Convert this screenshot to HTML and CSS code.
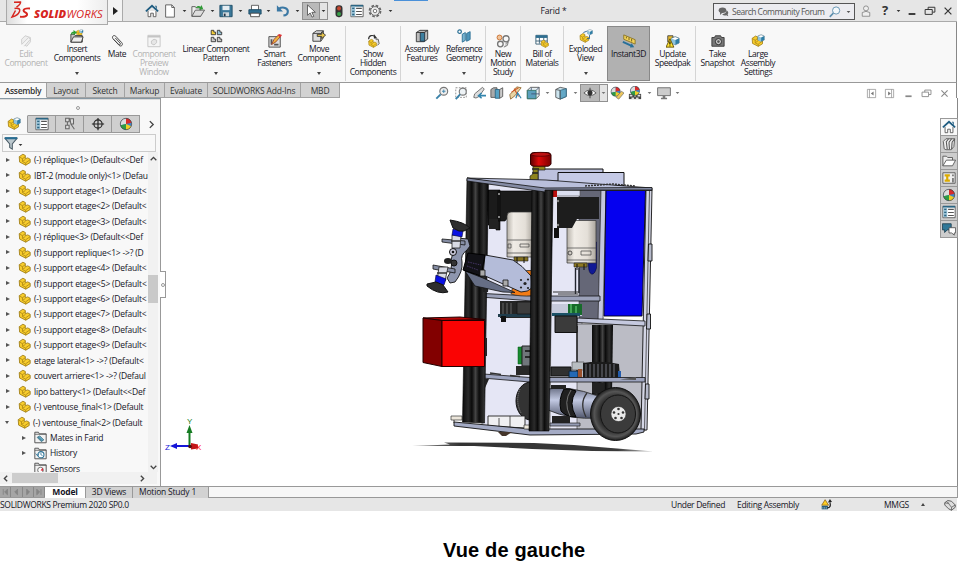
FILE: index.html
```html
<!DOCTYPE html>
<html lang="fr">
<head>
<meta charset="utf-8">
<title>Vue de gauche</title>
<link rel="stylesheet" href="styles.css">
</head>
<body>
<svg class="sprite" aria-hidden="true">
  <symbol id="dd" viewBox="0 0 6 4"><path d="M0.8 0.7h4.4L3 3.3z" fill="currentColor"/></symbol>
  <symbol id="home" viewBox="0 0 16 16"><path d="M3.5 8v6.5h3v-4h3v4h3V8" fill="#fff" stroke="#555"/><path d="M1 8.5 8 2l7 6.500" fill="none" stroke="#1f5c80" stroke-width="2"/><path d="M11.500 2.500h1.500v3" fill="none" stroke="#1f5c80"/></symbol>
  <symbol id="new" viewBox="0 0 16 16"><path d="M3 1h7l3 3v11H3z" fill="#fff" stroke="#555"/><path d="M10 1v3h3" fill="none" stroke="#555"/></symbol>
  <symbol id="open" viewBox="0 0 16 16"><path d="M1 14V3h4l1 1.500h5V14z" fill="#eee" stroke="#555"/><path d="M1 14 5 7h10.500L11 14z" fill="#ddd" stroke="#555"/><path d="M5 5c2-3 4-3 6-2l1-2 2 5-5 .5 1-2C8 4 6 4 5 5z" fill="#2f9a36"/></symbol>
  <symbol id="save" viewBox="0 0 16 16"><path d="M1 1.500h14v13H1z" fill="#3b7899" stroke="#1c4a63"/><path d="M4 2h8v5H4z" fill="#e5edf2"/><path d="M4.500 9.500h7V14h-7z" fill="#cfd8dd"/><path d="M5.500 11h2v3h-2z" fill="#234"/></symbol>
  <symbol id="print" viewBox="0 0 16 16"><path d="M4 1.500h8V7H4z" fill="#fff" stroke="#555"/><path d="M1 6.500h14v5H1z" fill="#2f6e90" stroke="#1c4a63"/><path d="M3 10.500h10v4H3z" fill="#fff" stroke="#444"/></symbol>
  <symbol id="undo" viewBox="0 0 16 16"><path d="M3 5.500c5-3 11-1 10.500 3.500-.3 3-2.500 4-5 4" fill="none" stroke="#3b78a4" stroke-width="2.400"/><path d="M1 1.500v7h7z" fill="#3b78a4"/></symbol>
  <symbol id="cursor" viewBox="0 0 16 16"><path d="M4 1v12l3-2.800L9.200 15l2-.9L9 9.500h4z" fill="#fff" stroke="#555"/></symbol>
  <symbol id="traffic" viewBox="0 0 16 16"><rect x="4" y="1.500" width="8" height="13.500" rx="3.500" fill="#333"/><circle cx="8" cy="5" r="2.300" fill="#c4472f"/><circle cx="8" cy="11.300" r="2.300" fill="#39a14a"/></symbol>
  <symbol id="list" viewBox="0 0 16 16"><path d="M1 1.500h14v13H1z" fill="#fff" stroke="#555"/><path d="M1 1h14v2H1z" fill="#2b6583"/><path d="M1.500 3h4.500v11h-4.500z" fill="#9cc3d6"/><path d="M2.500 5h2.500M2.500 8.500h2.500M2.500 12h2.500" stroke="#2b6583" stroke-width="1.500"/><path d="M7 5h6.500M7 8.500h6.500M7 12h6.500" stroke="#555" stroke-width="1.200"/></symbol>
  <symbol id="gear" viewBox="0 0 16 16"><circle cx="8" cy="8" r="6.300" fill="none" stroke="#666" stroke-width="2" stroke-dasharray="3 1.950"/><circle cx="8" cy="8" r="5" fill="#eee" stroke="#666"/><circle cx="8" cy="8" r="2" fill="#fff" stroke="#666"/></symbol>
  <symbol id="chat" viewBox="0 0 16 16"><ellipse cx="6.500" cy="6" rx="5.500" ry="4" fill="#666"/><path d="M3 8v5l4-4z" fill="#666"/><path d="M12.500 6q4 3 1.500 6l1 3-3-1.500q-4 1-6-2 6-.5 6.500-5.500z" fill="#666"/></symbol>
  <symbol id="glass" viewBox="0 0 16 16"><circle cx="9.500" cy="6" r="4.800" fill="#f3f8fb" stroke="#5c8fae" stroke-width="1.200"/><path d="M5.800 9.500 1 14.500" stroke="#5c8fae" stroke-width="2"/></symbol>
  <symbol id="user" viewBox="0 0 16 16"><circle cx="8" cy="4.500" r="3.300" fill="#eee" stroke="#777"/><path d="M3 15V10q5-3 10 0v5z" fill="#eee" stroke="#777"/></symbol>
  <symbol id="min" viewBox="0 0 16 16"><path d="M3.500 12h9" stroke="currentColor" stroke-width="2.500"/></symbol>
  <symbol id="restore" viewBox="0 0 16 16"><path d="M5.500 6V3h9v6.500h-3" fill="none" stroke="currentColor" stroke-width="1.300"/><path d="M1.500 6h9.500v6.500H1.500z" fill="none" stroke="currentColor" stroke-width="1.300"/></symbol>
  <symbol id="close" viewBox="0 0 16 16"><path d="m3.500 3.500 9 9m0-9-9 9" stroke="currentColor" stroke-width="1.600"/></symbol>
  <symbol id="part" viewBox="0 0 16 16"><path d="M1.500 4.500 6 1.500l3 1.500v4l3-1 3 1.700v4L9.500 15 2 11.200z" fill="#f8cd2c" stroke="#9a770f"/><path d="M2 5l3.500 2v3.500L9.500 12.500V15M5.500 7 9 4.500M9.500 12 14.500 8.500M6 10l3-2" fill="none" stroke="#9a770f" stroke-width=".8"/></symbol>
  <symbol id="cube" viewBox="0 0 16 16"><path d="M8 1.500 14.500 4v8L8 15 1.500 12V4z" fill="#fff" stroke="#1f4f68"/><path d="M8 7 14.500 4v8L8 15z" fill="#2f7ea6"/><path d="M1.500 4 8 7v8L1.500 12z" fill="#8ec3dc"/></symbol>
  <symbol id="asm" viewBox="0 0 16 16"><use href="#part" x="0" y="1" width="14" height="14"/><use href="#cube" x="7" y="0" width="9" height="9"/></symbol>
  <symbol id="edit" viewBox="0 0 16 16"><g opacity=".35"><path d="M3 6 7 2l6 2v5l-4 5-6-3z" fill="#ddd" stroke="#777"/><path d="m3 12 8-8 2 2-7 8" fill="#eee" stroke="#777"/></g></symbol>
  <symbol id="insert" viewBox="0 0 16 16"><use href="#asm" x="6" y="0" width="10" height="9"/><path d="M1 15V6h4l1 1.500h8V15z" fill="#c9c9c9" stroke="#333"/><path d="M1 15 4 9h11l-2 6z" fill="#eee" stroke="#333"/><path d="M1 7C1 3 3 3 4 3V1l4 3-4 3V5C3 5 2 5 1 7z" fill="#2ba032"/></symbol>
  <symbol id="mate" viewBox="0 0 16 16"><path d="M4 6 10.500 13c2 2 5-.5 3-3L6.500 2.500c-2.200-2-5 .5-3 3L10 12c1.300 1 2.600-.5 1.500-1.700L6 4.500" fill="none" stroke="#444" stroke-width="1.100"/></symbol>
  <symbol id="preview" viewBox="0 0 16 16"><g opacity=".4"><path d="M1 1.500h14v13H1z" fill="#f3f3f3" stroke="#777"/><path d="M1 3h14" stroke="#777" stroke-width="2"/><path d="m5 8 3-2 3 1v3l-3 2.500L5 11z" fill="#ccc" stroke="#777"/></g></symbol>
  <symbol id="linear" viewBox="0 0 16 16"><g stroke="#333" fill="#ccc"><path d="M2.500 1.500h3v2h2v3h-5z" fill="#f2cd3a"/><path d="M9.500 1.500h3v2h2v3h-5z" fill="#9ac5da"/><path d="M2.500 9.500h3v2h2v3h-5zM9.500 9.500h3v2h2v3h-5z"/></g></symbol>
  <symbol id="smart" viewBox="0 0 16 16"><path d="M1 3h13v12H1z" fill="#ddd" stroke="#444"/><path d="M3 6h2v6H3zM7 11h5v2H7z" fill="#555"/><path d="m4 12 3-6 5-5 2 2-5 6z" fill="#efb33c" stroke="#943"/><path d="m11 1 3 3 2-3-3-1z" fill="#d33"/></symbol>
  <symbol id="move" viewBox="0 0 16 16"><path d="M1 5 5 2h8v8l-3 4H1z" fill="#ddd" stroke="#333"/><path d="M1 5h9l3-3M10 5v9" fill="none" stroke="#333"/><path d="M6 6h5V3.500L15.500 7 11 11V8.500H6z" fill="#e7c54b" stroke="#333"/></symbol>
  <symbol id="hidden" viewBox="0 0 16 16"><path d="M3 6c0-5 5-5 7-3" fill="none" stroke="#333" stroke-width="1.400"/><path d="M9 0v5h4z" fill="#333"/><use href="#part" x="2" y="5" width="11" height="11"/><path d="M11 6h3l1 5-2 2" fill="#ddd" stroke="#555"/></symbol>
  <symbol id="afeat" viewBox="0 0 16 16"><path d="m1.500 4 4-2.500h9v10l-4 3h-9z" fill="#bbb" stroke="#333"/><path d="M6 4h5v10H6z" fill="#3d7f9f" stroke="#234"/><path d="M1.500 4h9l4-2.500" fill="none" stroke="#333"/></symbol>
  <symbol id="refgeo" viewBox="0 0 16 16"><circle cx="3" cy="3" r="2" fill="#fff" stroke="#2a6f94" stroke-width="1.400"/><path d="M6 6 9.500 4v9L6 15z" fill="#79b3d0" stroke="#2a6f94"/><path d="M11 5 15 3v9l-4 2z" fill="#4f96bb" stroke="#2a6f94"/></symbol>
  <symbol id="motion" viewBox="0 0 16 16"><circle cx="4" cy="4" r="2.800" fill="#eec49c" stroke="#c86a28"/><g fill="none" stroke="#777" stroke-width="1.500"><circle cx="11.500" cy="5.500" r="3.500"/><circle cx="5" cy="11.500" r="3.200"/></g><path d="m11 11 3-2-1 4-4 2" fill="#ccc" stroke="#777"/></symbol>
  <symbol id="bom" viewBox="0 0 16 16"><path d="M1 1.500h13v10H1z" fill="#fff" stroke="#355b72"/><path d="M1 1.500h13v3H1z" fill="#2e6f92"/><path d="M5 4v7M10 4v7M1 8h13" stroke="#355b72"/><use href="#part" x="6" y="6" width="10" height="10"/></symbol>
  <symbol id="explode" viewBox="0 0 16 16"><use href="#part" x="0" y="4" width="12" height="12"/><use href="#cube" x="9" y="0" width="7" height="7"/><path d="M5 4 9 2.500M12 7v4h-3" fill="none" stroke="#245c91"/></symbol>
  <symbol id="instant" viewBox="0 0 16 16"><path d="m2 1 13 5.500v5L2 6z" fill="#f2d35a" stroke="#8a7320"/><path d="M5 3v2M8 4v3M11 5.500v3" stroke="#665615"/><path d="m1 9 10 4.500" stroke="#287099" stroke-width="2.200"/><path d="m14 15-5 .5 2-5z" fill="#287099"/></symbol>
  <symbol id="speedpak" viewBox="0 0 16 16"><path d="M2 2h6v7H2z" fill="#e5b92e" stroke="#444"/><use href="#cube" x="5" y="0" width="11" height="15"/><path d="M4.500 5.500 9 15H0z" fill="#ffe22e" stroke="#594800"/><path d="M4.500 8.500v3.500M4.500 13v1" stroke="#000" stroke-width="1.300"/></symbol>
  <symbol id="camera" viewBox="0 0 16 16"><path d="M1 4h3l1-2h6l1 2h3v10H1z" fill="#777" stroke="#333"/><circle cx="8.500" cy="8.700" r="3.500" fill="#ccc" stroke="#222"/><circle cx="8.500" cy="8.700" r="1.500" fill="#555"/></symbol>
  <symbol id="zoomfit" viewBox="0 0 16 16"><circle cx="10" cy="6" r="4.500" fill="#eee" stroke="#777" stroke-width="1.300"/><path d="M8 6h4M10 4v4" stroke="#3981a8"/><path d="M6.500 9.500 1.500 14.500" stroke="#3981a8" stroke-width="2.200"/></symbol>
  <symbol id="zoomarea" viewBox="0 0 16 16"><path d="M2 2h12v11H2z" fill="none" stroke="#888" stroke-dasharray="2 1.500"/><circle cx="10" cy="6.500" r="4" fill="#eef3f6" stroke="#777" stroke-width="1.300"/><path d="M7 9.500 2 15" stroke="#3981a8" stroke-width="2.200"/></symbol>
  <symbol id="prev" viewBox="0 0 16 16"><path d="M3 9 12 1.500l2 2L8 12q-4 3-6 1z" fill="#ddd" stroke="#666"/><path d="M8 11h8M11 8l-3.500 3 3.500 3" fill="none" stroke="#3485ad" stroke-width="1.800"/></symbol>
  <symbol id="section" viewBox="0 0 16 16"><path d="M1 4 4 2h4v11H1z" fill="#aaa" stroke="#555"/><path d="M6 4h5v10H6z" fill="#56a2c4" stroke="#2a6685"/><path d="M11 4 14.500 2v10L11 14z" fill="#ccc" stroke="#555"/></symbol>
  <symbol id="dyn" viewBox="0 0 16 16"><path d="M2 10 10 1l5 1-7 9-5 4z" fill="#e8d5a4" stroke="#946b35"/><path d="m7 3 5 9M4 7l8-5" stroke="#cf5a2a" stroke-width="1.200"/><path d="m9 14 2-6 4 6" fill="none" stroke="#3485ad" stroke-width="1.400"/></symbol>
  <symbol id="orient" viewBox="0 0 16 16"><path d="M1.500 5 5 1.500h10V11l-3.500 3.500h-10z" fill="#e7eff3" stroke="#555"/><path d="M1.500 5H11.500v9.500h-10z" fill="#5b9fbd" stroke="#376"/><path d="m11.500 5 3.500-3.500M6 2v3M6 9h9" fill="none" stroke="#457"/></symbol>
  <symbol id="display" viewBox="0 0 16 16"><path d="m2 4 5-2.500L14 3v9l-7 3-5-2z" fill="#cde5ef" stroke="#555"/><path d="m7 5 7-2v9l-7 3z" fill="#64a8c6" stroke="#356b86"/><path d="m2 4 5 1v10" fill="none" stroke="#555"/></symbol>
  <symbol id="eye" viewBox="0 0 16 16"><path d="M1 8q7-7 14 0-7 6-14 0z" fill="#fff" stroke="#555"/><circle cx="8" cy="7.800" r="2.900" fill="#333"/><path d="M8 2v12" stroke="#333"/></symbol>
  <symbol id="ball" viewBox="0 0 16 16"><circle cx="8" cy="8" r="6.500" fill="#3d85c7"/><path d="M8 8V1.500A6.500 6.500 0 0 0 1.700 9.500z" fill="#ddd"/><path d="M8 8V1.500a6.500 6.500 0 0 1 6.300 5z" fill="#d92b2b"/><path d="M8 8 1.700 9.500A6.500 6.500 0 0 0 8 14.500z" fill="#2f9b45"/><path d="M8 8v6.500a6.500 6.500 0 0 0 6-4z" fill="#f0cf26"/><circle cx="8" cy="8" r="6.500" fill="none" stroke="#444" stroke-width=".8"/></symbol>
  <symbol id="appear" viewBox="0 0 16 16"><use href="#ball" x="0" y="0" width="13" height="13"/><path d="m7 13 6-7 3 2-6 7z" fill="#ecc65d" stroke="#666" stroke-width=".7"/></symbol>
  <symbol id="scene" viewBox="0 0 16 16"><path d="M1 9h14v6H1z" fill="#444"/><path d="M2 11h3M7 11h2M11 11h3M4 14h3M9 14h3" stroke="#ddd" stroke-width="1.800"/><use href="#ball" x="1.500" y="-1" width="13" height="13"/></symbol>
  <symbol id="monitor" viewBox="0 0 16 16"><path d="M.7 2h14.600v9H.7z" fill="#ccc" stroke="#666"/><path d="M6.500 11h3v2.500h2V15h-7v-1.500h2z" fill="#777"/></symbol>
  <symbol id="paneL" viewBox="0 0 16 16"><path d="M2 2h12v12H2zM5 2v12" fill="none" stroke="#888"/><path d="m11 5-4 3 4 3z" fill="#777"/></symbol>
  <symbol id="paneR" viewBox="0 0 16 16"><path d="M2 2h12v12H2zM11 2v12" fill="none" stroke="#888"/><path d="m6 5 4 3-4 3z" fill="#777"/></symbol>
  <symbol id="config" viewBox="0 0 16 16"><path d="M3 1.500h4v4H3zM3 9.500h4v4H3zM8 2h4v6H9zM9 8l4 6M5 5.500v4" fill="#ddd" stroke="#666" stroke-width="1.200"/></symbol>
  <symbol id="dim" viewBox="0 0 16 16"><circle cx="8" cy="8" r="4.700" fill="none" stroke="#222" stroke-width="1.300"/><path d="M8 1v14M1 8h14" stroke="#222" stroke-width="1.300"/></symbol>
  <symbol id="filter" viewBox="0 0 16 16"><path d="M1 2.500h14L9.500 9v6l-3-1.800V9z" fill="#bcc8ce" stroke="#4d5e68" stroke-width="1.200"/><path d="M1 2.500h14" stroke="#286d92" stroke-width="2.500"/></symbol>
  <symbol id="books" viewBox="0 0 16 16"><path d="m1.500 5 3-3h10l-1 9-3 3.500h-6l-2-1z" fill="#eee" stroke="#555"/><path d="m4.500 6 3-4M8 6l3-4M11.500 6l3-4M5 6l1 8M8 6l.5 8M11.500 6l-.5 8" fill="none" stroke="#555" stroke-width="1.200"/></symbol>
  <symbol id="folder" viewBox="0 0 16 16"><path d="M1 13.500v-11h4L6.500 4H12v3" fill="#eee" stroke="#555"/><path d="M1 13.500 5 7h10.500l-3.500 6.500z" fill="#fff" stroke="#555"/></symbol>
  <symbol id="palette" viewBox="0 0 16 16"><path d="M1 2h14v12H1z" fill="#eee" stroke="#555"/><path d="M3 5h6M6 5v5M3 11h6" stroke="#dcab00" stroke-width="2.500"/><path d="M11.500 4h2v2h-2zM11.500 8h2v5h-2z" fill="#777"/></symbol>
  <symbol id="forum" viewBox="0 0 16 16"><path d="M.5 2h10v7H6l-3 3V9H.5z" fill="#2f7898" stroke="#245"/><path d="M8 6.500h7.500v6H14v2.500l-3-2.500H8z" fill="#fff" stroke="#555"/></symbol>
  <symbol id="fold" viewBox="0 0 16 16"><path d="M1 14.500v-13h4.500l1 2h8.500v11z" fill="#f2f2f2" stroke="#555" stroke-width="1.200"/><path d="M1 4h14" stroke="#555"/></symbol>
  <symbol id="rebuild" viewBox="0 0 16 16"><path d="m6 1 5 8H1z" fill="#ffce22" stroke="#805500"/><path d="M1 10h9v5H1z" fill="#275d7c"/><path d="M2 13h7" stroke="#fff" stroke-dasharray="1.500 1"/><path d="M9 13c5 0 5-4 4-8" fill="none" stroke="#222" stroke-width="1.800"/><path d="m10 5 6-.5L13 0z" fill="#222"/></symbol>
  <symbol id="tag" viewBox="0 0 16 16"><path d="M1 5 5 2l5 1 5 5v3l-5 4-4-2-5-5z" fill="#ddd" stroke="#555" stroke-width="1.200"/><path d="m1 5 5 1 4 5 5-3M10 11v4M4 4l3 2" fill="none" stroke="#555"/></symbol>
</svg>

<main class="window">
  <header class="titlebar">
    <div class="logo">
      <svg class="ds" viewBox="0 0 20 17"><g fill="none" stroke="#d6261f"><path d="M3 1.200 9.500 1Q10 3 5.500 6.200" stroke-width="1.500"/><path d="M3.500 7.500Q10 6.500 8.500 10.500 7 14.500 1 16L4.500 9.500" stroke-width="1.500"/><path d="M19 7.500Q13 7 12.500 9.500C12.500 11.500 17 11.500 16 14 15 16 11.500 16 9 15.800" stroke-width="1.900"/></g></svg>
      <span class="brand"><b>SOLID</b>WORKS</span>
    </div>
    <div class="play"></div>
    <nav class="quick">
      <svg><use href="#home"/></svg><svg><use href="#new"/></svg><svg class="dd"><use href="#dd"/></svg>
      <svg><use href="#open"/></svg><svg class="dd"><use href="#dd"/></svg><svg><use href="#save"/></svg><svg class="dd"><use href="#dd"/></svg>
      <svg><use href="#print"/></svg><svg class="dd"><use href="#dd"/></svg><svg><use href="#undo"/></svg><svg class="dd"><use href="#dd"/></svg>
      <span class="pressed"><svg><use href="#cursor"/></svg></span><span class="pressed-dd"><svg class="dd"><use href="#dd"/></svg></span>
      <svg><use href="#traffic"/></svg><svg><use href="#list"/></svg><svg><use href="#gear"/></svg><svg class="dd"><use href="#dd"/></svg>
    </nav>
    <div class="doc"><i class="accent"></i>Farid *</div>
    <div class="search"><svg><use href="#chat"/></svg><span>Search Community Forum</span><svg class="lens"><use href="#glass"/></svg><svg class="dd"><use href="#dd"/></svg></div>
    <div class="sys"><svg><use href="#user"/></svg><b>?</b><svg class="dd"><use href="#dd"/></svg><svg><use href="#min"/></svg><svg><use href="#restore"/></svg><svg><use href="#close"/></svg></div>
  </header>

  <section class="ribbon">
    <div class="cmd off"><svg><use href="#edit"/></svg><span>Edit<br>Component</span></div>
    <div class="cmd menu"><svg><use href="#insert"/></svg><span>Insert<br>Components</span></div>
    <div class="cmd"><svg><use href="#mate"/></svg><span>Mate</span></div>
    <div class="cmd off"><svg><use href="#preview"/></svg><span>Component<br>Preview<br>Window</span></div>
    <div class="cmd menu"><svg><use href="#linear"/></svg><span>Linear Component<br>Pattern</span></div>
    <div class="cmd"><svg><use href="#smart"/></svg><span>Smart<br>Fasteners</span></div>
    <div class="cmd menu end"><svg><use href="#move"/></svg><span>Move<br>Component</span></div>
    <div class="cmd end"><svg><use href="#hidden"/></svg><span>Show<br>Hidden<br>Components</span></div>
    <div class="cmd menu"><svg><use href="#afeat"/></svg><span>Assembly<br>Features</span></div>
    <div class="cmd menu end"><svg><use href="#refgeo"/></svg><span>Reference<br>Geometry</span></div>
    <div class="cmd end"><svg><use href="#motion"/></svg><span>New<br>Motion<br>Study</span></div>
    <div class="cmd end"><svg><use href="#bom"/></svg><span>Bill of<br>Materials</span></div>
    <div class="cmd menu"><svg><use href="#explode"/></svg><span>Exploded<br>View</span></div>
    <div class="cmd active"><svg><use href="#instant"/></svg><span>Instant3D</span></div>
    <div class="cmd end"><svg><use href="#speedpak"/></svg><span>Update<br>Speedpak</span></div>
    <div class="cmd"><svg><use href="#camera"/></svg><span>Take<br>Snapshot</span></div>
    <div class="cmd"><svg><use href="#asm"/></svg><span>Large<br>Assembly<br>Settings</span></div>
  </section>

  <div class="tabrow">
    <div class="tabs"><span class="on">Assembly</span><span>Layout</span><span>Sketch</span><span>Markup</span><span>Evaluate</span><span>SOLIDWORKS Add-Ins</span><span>MBD</span></div>
    <div class="hud">
      <svg><use href="#zoomfit"/></svg><svg><use href="#zoomarea"/></svg><svg><use href="#prev"/></svg><svg><use href="#section"/></svg><svg><use href="#dyn"/></svg><svg><use href="#orient"/></svg><svg class="dd"><use href="#dd"/></svg><svg><use href="#display"/></svg><svg class="dd"><use href="#dd"/></svg><span class="pressed"><svg><use href="#eye"/></svg></span><span class="pressed-dd"><svg class="dd"><use href="#dd"/></svg></span><svg><use href="#appear"/></svg><svg><use href="#scene"/></svg><svg class="dd"><use href="#dd"/></svg><svg><use href="#monitor"/></svg><svg class="dd"><use href="#dd"/></svg>
    </div>
    <div class="docsys"><svg><use href="#paneL"/></svg><svg><use href="#paneR"/></svg><svg><use href="#min"/></svg><svg><use href="#restore"/></svg><svg><use href="#close"/></svg></div>
  </div>

  <div class="work">
    <aside class="panel">
      <div class="grip"><i></i></div>
      <div class="ptabs">
        <span class="on"><svg><use href="#asm"/></svg></span><span><svg><use href="#list"/></svg></span><span><svg><use href="#config"/></svg></span><span><svg><use href="#dim"/></svg></span><span><svg><use href="#ball"/></svg></span>
        <svg class="more" viewBox="0 0 8 8"><path d="m2.500 1 3 3-3 3" fill="none" stroke="#444" stroke-width="1.200"/></svg>
      </div>
      <div class="filter"><svg><use href="#filter"/></svg><svg class="dd"><use href="#dd"/></svg></div>
      <div class="treebox">
        <ul class="tree">
          <li><svg><use href="#part"/></svg>(-) réplique&lt;1&gt; (Default&lt;&lt;Def</li>
          <li><svg><use href="#part"/></svg>IBT-2 (module only)&lt;1&gt; (Defau</li>
          <li><svg><use href="#part"/></svg>(-) support etage&lt;1&gt; (Default&lt;</li>
          <li><svg><use href="#part"/></svg>(-) support etage&lt;2&gt; (Default&lt;</li>
          <li><svg><use href="#part"/></svg>(-) support etage&lt;3&gt; (Default&lt;</li>
          <li><svg><use href="#part"/></svg>(-) réplique&lt;3&gt; (Default&lt;&lt;Def</li>
          <li><svg><use href="#part"/></svg>(f) support replique&lt;1&gt; -&gt;? (D</li>
          <li><svg><use href="#part"/></svg>(-) support etage&lt;4&gt; (Default&lt;</li>
          <li><svg><use href="#part"/></svg>(f) support etage&lt;5&gt; (Default&lt;</li>
          <li><svg><use href="#part"/></svg>(-) support etage&lt;6&gt; (Default&lt;</li>
          <li><svg><use href="#part"/></svg>(-) support etage&lt;7&gt; (Default&lt;</li>
          <li><svg><use href="#part"/></svg>(-) support etage&lt;8&gt; (Default&lt;</li>
          <li><svg><use href="#part"/></svg>(-) support etage&lt;9&gt; (Default&lt;</li>
          <li><svg><use href="#part"/></svg>etage lateral&lt;1&gt; -&gt;? (Default&lt;</li>
          <li><svg><use href="#part"/></svg>couvert arriere&lt;1&gt; -&gt;? (Defaul</li>
          <li><svg><use href="#part"/></svg>lipo battery&lt;1&gt; (Default&lt;&lt;Def</li>
          <li><svg><use href="#part"/></svg>(-) ventouse_final&lt;1&gt; (Default</li>
          <li class="opened"><svg><use href="#part"/></svg>(-) ventouse_final&lt;2&gt; (Default</li>
          <li class="sub"><svg viewBox="0 0 16 16"><use href="#fold"/><path d="m5 7 5 5M7 6l5 5-3 2-5-5z" fill="#6ab2d2" stroke="#367"/></svg>Mates in Farid</li>
          <li class="sub"><svg viewBox="0 0 16 16"><use href="#fold"/><circle cx="8.500" cy="9.500" r="3.800" fill="#fff" stroke="#2d7397" stroke-width="1.300"/><path d="M8.500 7v2.500l2 1M2 8l2.500 3L6 8" fill="none" stroke="#2d7397"/></svg>History</li>
          <li class="sub leaf"><svg viewBox="0 0 16 16"><use href="#fold"/><circle cx="8" cy="10" r="3.500" fill="#fff" stroke="#555"/><path d="M8 10l3-3v4z" fill="#d23"/></svg>Sensors</li>
        </ul>
        <div class="vscroll"><svg viewBox="0 0 8 8"><path d="m1.500 5.500 2.500-2.500 2.500 2.500" fill="none" stroke="#444" stroke-width="1.200"/></svg><i></i><svg viewBox="0 0 8 8"><path d="m1.500 2.500 2.500 2.500 2.500-2.500" fill="none" stroke="#444" stroke-width="1.200"/></svg></div>
      </div>
      <div class="hscroll"><svg viewBox="0 0 8 8"><path d="m5.500 1.500-2.500 2.500 2.500 2.500" fill="none" stroke="#444" stroke-width="1.200"/></svg><i></i><svg viewBox="0 0 8 8"><path d="m2.500 1.500 2.500 2.500-2.500 2.500" fill="none" stroke="#444" stroke-width="1.200"/></svg></div>
      <div class="handle"><i></i></div>
    </aside>

    <section class="view">
      <svg class="scene" viewBox="161 98 796 388">
        <defs>
          <linearGradient id="gm" x1="0" x2="1"><stop offset="0" stop-color="#b5b0a8"/><stop offset=".25" stop-color="#f0ece6"/><stop offset=".7" stop-color="#e4dfd8"/><stop offset="1" stop-color="#aaa59d"/></linearGradient>
          <linearGradient id="gp" x1="0" x2="1"><stop offset="0" stop-color="#0b0b0b"/><stop offset=".22" stop-color="#2b2b2b"/><stop offset=".36" stop-color="#0a0a0a"/><stop offset=".5" stop-color="#444"/><stop offset=".64" stop-color="#0c0c0c"/><stop offset=".82" stop-color="#303030"/><stop offset="1" stop-color="#050505"/></linearGradient>
          <linearGradient id="gr" x1="0" x2="1"><stop offset="0" stop-color="#5a0000"/><stop offset=".4" stop-color="#df0a0a"/><stop offset="1" stop-color="#7a0000"/></linearGradient>
          <linearGradient id="ga" x1="0" x2="0" y1="0" y2="1"><stop offset="0" stop-color="#6c7288"/><stop offset=".4" stop-color="#c2c9e2"/><stop offset="1" stop-color="#50566c"/></linearGradient>
          <linearGradient id="gs" x1="0" x2="1"><stop offset="0" stop-color="#333" stop-opacity=".5"/><stop offset=".2" stop-color="#333"/><stop offset=".85" stop-color="#3a3a3a"/><stop offset="1" stop-color="#444" stop-opacity=".3"/></linearGradient>
          <radialGradient id="gw"><stop offset=".65" stop-color="#2e2e2e"/><stop offset=".85" stop-color="#555"/><stop offset="1" stop-color="#1d1d1d"/></radialGradient>
        </defs>
        <g stroke-linejoin="round">
          <path d="M412 446 450 444.500l-6-2 90 .5 40 2 80 6.500-62-.5-60-2-58-3z" fill="url(#gs)"/>
          <!-- rear walls -->
          <path d="M484 184h48v244h-50zM552 184h30v250h-32z" fill="#e5e6f5" stroke="#555" stroke-width=".6"/>
          <path d="M579 188h23v134h-23z" fill="#656777" stroke="#222" stroke-width=".5"/>
          <path d="M577 324h71l-2 106h-69z" fill="#bbbcc5" stroke="#333" stroke-width=".6"/>
          <path d="M577 326v54" stroke="#222" stroke-width="1.500"/>
          <path d="M592 325h21l-1 70h-20z" fill="url(#gp)"/>
          <path d="M556 184h24v12h-24z" fill="#dcdff0" stroke="#555" stroke-width=".6"/>
          <!-- upper plates -->
          <path d="M538 169h65v12h-65z" fill="#bdc2de" stroke="#111"/>
          <path d="M558 172.500h66v13h-66z" fill="#c5cae6" stroke="#111"/>
          <path d="M530 180v-4l3-2v-9h12v5h-7v10z" fill="#8e831c" stroke="#222" stroke-width=".7"/>
          <path d="M532 169h7M532 173h6" stroke="#222" stroke-width="1.500"/>
          <path d="M530.500 155q0-2 3-2.500h14q3.500.5 3.500 2.500v9q-1 2-3 2.200h-14q-3-.2-3.500-2z" fill="url(#gr)" stroke="#300"/>
          <ellipse cx="540.700" cy="154.300" rx="9.500" ry="2" fill="#bc1212" stroke="#300" stroke-width=".6"/>
          <path d="M550 181h7v16h-7z" fill="#b90e0e"/>
          <!-- motors -->
          <path d="M488 190h12v40h-4v-5h-8zM498 191h35v24h-23l-5 6h-7z" fill="#1b1b1b" stroke="#000" stroke-width=".6"/>
          <path d="M489 219h9v10h-9z" fill="#222"/>
          <path d="M507 216q0-4 4-4h22v45h-26z" fill="url(#gm)" stroke="#333" stroke-width=".7"/>
          <path d="M507 240h26M507 253h26M520 244h9v3h-9zM508 244h3v4h-3z" fill="none" stroke="#444" stroke-width=".7"/>
          <path d="M514 257h14v4h-14z" fill="#83701f" stroke="#222" stroke-width=".6"/><path d="M517 257v6M524 257v6" stroke="#111"/>
          <path d="M590 242h6.500v26q-2 7-5 6-3-1-3-9z" fill="#101995" stroke="#003" stroke-width=".5"/>
          <path d="M554 228h5v10h-5z" fill="#111"/>
          <path d="M567 228 574 220.500h22V263h-29z" fill="url(#gm)" stroke="#333" stroke-width=".7"/>
          <path d="M557 197h42v22h-22l-5 9h-15z" fill="#1d1d1d"/>
          <path d="M567 248h29M567 260h29M581 251h10v4h-10z" fill="none" stroke="#444" stroke-width=".7"/><circle cx="570" cy="253" r="2" fill="none" stroke="#222" stroke-width=".7"/>
          <path d="M574 263h13v4h-13z" fill="#8e7922" stroke="#222" stroke-width=".6"/><path d="M577 264v6M584 264v6" stroke="#111"/>
          <circle cx="499" cy="194" r="1" fill="#aaa"/><circle cx="499" cy="217" r="1" fill="#aaa"/><circle cx="558" cy="201" r="1.200" fill="#888"/><circle cx="558" cy="225" r="1.200" fill="#888"/>
          <path d="M575.500 268v26M579 268v25M602 190v130" stroke="#22252f" stroke-width="1.400"/>
          <!-- blue panel and right frame -->
          <path d="M601 190h5l-3 132h-5z" fill="#c4c7dd" stroke="#222" stroke-width=".7"/>
          <path d="M606 190.500h39.500L642 316h-38z" fill="#0500ef" stroke="#001" stroke-width=".9"/>
          <path d="M646 190h6l-5 240h-6z" fill="#d4d6e5" stroke="#111" stroke-width=".9"/><path d="M649.500 190 644.500 430" stroke="#222" stroke-width=".7"/>
          <path d="M648.500 244h3.500v17h-4zM647 314h3.500v15h-4zM645.500 384h3.500v15h-4z" fill="#b6bacb" stroke="#111" stroke-width=".9"/>
          <path d="M577 318 645 321v5l-68-3.500z" fill="#c5c9df" stroke="#111" stroke-width=".8"/>
          <!-- middle shelf -->
          <path d="M474 293 532 296h68v5H532l-58-4.500z" fill="#9ba1b9" stroke="#111" stroke-width=".8"/>
          <path d="M553 292h26M558 294h20" stroke="#333"/>
          <path d="M500 301h32v17h-32z" fill="#252525"/><path d="M503 303v11M507 303v11M511 303v11" stroke="#777" stroke-width=".8"/><path d="M498 314h34v3h-34z" fill="#203d4c"/><path d="M501 316h5v6h-5z" fill="#111"/><path d="M517 302h15v12h-15z" fill="#3d3d3d" stroke="#111" stroke-width=".7"/>
          <path d="M552 304h30v12h-30z" fill="#c5c9da"/><path d="M568 304h14v11h-14z" fill="#176b2b"/><path d="M571 304v10M576 306v10" stroke="#53b966" stroke-width="1.500"/><path d="M552 313h28v3h-28z" fill="#1b5267"/>
          <path d="M555 316h22v16.500h-22z" fill="#3b3b3b" stroke="#111"/>
          <!-- lower electronics -->
          <path d="M518 347h4v17h-4z" fill="#198a31" stroke="#051" stroke-width=".5"/><path d="M522 346h10v20h-10z" fill="#70767b" stroke="#222"/><path d="M525 351h5M525 357h5" stroke="#111" stroke-width="1.500"/><path d="M516 366h16v9h-16z" fill="#282828"/>
          <path d="M551 367h20v9h-20z" fill="#303030" stroke="#111"/><path d="M572 362h12v8h-12z" fill="#b8bdc2" stroke="#444" stroke-width=".6"/>
          <path d="M569 371h9v7h-9z" fill="#2369b5" stroke="#123"/><path d="M578 369h4v9h-4z" fill="#9c522e"/>
          <path d="M583 363q18-3 36 1l1 14h-37z" fill="#1b1b1b"/><path d="M586 364v14M590 364v14M594 364v14M598 364v14M602 364v14M606 364v14M610 364v14M614 364v14" stroke="#858994" stroke-width=".8"/><path d="M618 371h3v8h-3z" fill="#235bac"/>
          <path d="m470 373 60 4.500h115v4.500H530l-60-5z" fill="#9da4bf" stroke="#111" stroke-width=".8"/><path d="m490 373 11 1.500M510 375.500l10 1" stroke="#333" stroke-width="1.500"/>
          <path d="M620 379.500 636 377v3z" fill="#555"/>
          <!-- axle -->
          <path d="M592 383h12v10h-12z" fill="#222"/>
          <ellipse cx="531" cy="401" rx="15" ry="19" fill="#333" stroke="#111"/><path d="M520 389q-5 12 1 24" fill="none" stroke="#888" stroke-dasharray="1 1"/>
          <path d="M548 389q20-4 50 7v22q-28 2-50-8z" fill="url(#ga)" stroke="#222" stroke-width=".8"/>
          <path d="M564 389q6-1 12 2-8 12 0 26-10 0-15-6-3-12 3-22z" fill="#202020" stroke="#000"/><path d="M571 390q-8 12-1 26" fill="none" stroke="#888" stroke-width=".8"/>
          <path d="M587 393q-8 10-1 24" fill="none" stroke="#333" stroke-width="1.300"/>
          <path d="M551 385h15v4h-15zM552 416h18v8h-18z" fill="#232323"/><path d="M550 423h30v3h-30z" fill="#959cb4" stroke="#222" stroke-width=".7"/>
          <!-- base -->
          <path d="M488 416h37v12l-37-2z" fill="#f0f0f2" stroke="#222" stroke-width=".9"/><path d="M499 418v8M510 416v11" stroke="#333" stroke-width=".8"/>
          <path d="m454 422 76 7h114v3l-8 2-106 1-76-9z" fill="#a4abc5" stroke="#111" stroke-width=".9"/>
          <path d="M451 416h11v4h-11zM524 425h10v4h-10z" fill="#ece6db" stroke="#333" stroke-width=".7"/><path d="M454 420v3" stroke="#333"/>
          <path d="M498 432h14l-6 4h-4z" fill="#44352a"/>
          <!-- wheel -->
          <ellipse cx="615.500" cy="414" rx="25" ry="26.500" fill="url(#gw)" stroke="#111"/><ellipse cx="618" cy="414" rx="17.500" ry="19" fill="#3b3b3b" stroke="#151515"/>
          <circle cx="618.500" cy="414" r="7.600" fill="#e9e9e9" stroke="#333" stroke-width=".7"/><g fill="#333"><circle cx="618.500" cy="409" r="1.300"/><circle cx="623" cy="412.500" r="1.300"/><circle cx="621.500" cy="418" r="1.300"/><circle cx="615.500" cy="418" r="1.300"/><circle cx="614" cy="412.500" r="1.300"/><circle cx="618.500" cy="414" r="1.100"/></g>
          <!-- left pillar -->
          <path d="M467 179h21.500l-4 244-22-1z" fill="url(#gp)" stroke="#000" stroke-width=".6"/>
          <path d="M483 280h6l-1 12h-5zM484 338h3v18h-3zM484 379h5l-4 9z" fill="#222"/>
          <!-- gripper arm -->
          <path d="M520 270.500h13v25q-13 1.500-22-1.500l2-8z" fill="#f27b15" stroke="#333" stroke-width=".8"/>
          <path d="m465 271 18 7 32 14.500-12-.5-28-6z" fill="#666e85" stroke="#111" stroke-width=".8"/>
          <path d="m485 255 28 5q9 5 18 16l1 12q-4 4-11 4l-38-17z" fill="#b4bcd9" stroke="#111" stroke-width=".9"/>
          <path d="m468 253 17 2-4 21-18-6z" fill="#121217" stroke="#000"/><path d="m468 262 13 3M467 266l11 4" stroke="#453465" stroke-dasharray="1.500 1"/>
          <g fill="#222"><circle cx="525" cy="283.500" r="1.600"/><circle cx="521" cy="280" r="1.100"/><circle cx="528" cy="279.500" r="1.100"/><circle cx="521" cy="287.500" r="1.100"/><circle cx="528" cy="288" r="1.100"/></g>
          <path d="M480 270h5v6h-5zM503 280h5v6h-5z" fill="#aaa" stroke="#111" stroke-width=".8"/>
          <!-- centre pillar and top plate -->
          <path d="M532 188h21l-4 243h-20z" fill="url(#gp)" stroke="#000" stroke-width=".6"/>
          <path d="m467 178 62 1.500 17 .5 106 8v2.500L545 190z" fill="#b9bfdb" stroke="#111" stroke-width=".8"/>
          <path d="m467 178 78 10 107-.5v2.500H545v2l-78-11z" fill="#858ca5" stroke="#111" stroke-width=".8"/>
          <path d="M585 186 613 184l22 2" fill="none" stroke="#333" stroke-width="1.500" stroke-dasharray="2 1"/>
          <path d="m457 238 11 1 2 7-3 4q-7 5-5 12 1 10-7 20l-5 1-3-5q6-8 4-18z" fill="#8e96ae" stroke="#111" stroke-width=".9"/>
          <path d="m442 239 23 2v4l-23-3zM433 265l22 4v4l-22-4z" fill="#858da4" stroke="#111" stroke-width=".8"/>
          <path d="M452 235h9l-1 13h-8zM439 267h9l-3 14h-8z" fill="#d9dbe4" stroke="#222" stroke-width=".8"/><path d="M451 241h10M437 273h10" stroke="#333" stroke-width="1.300"/>
          <circle cx="453" cy="252" r="3.500" fill="#ccd" stroke="#111"/><circle cx="453" cy="252" r="1.300" fill="#111"/><circle cx="454" cy="263" r="3" fill="#333" stroke="#111"/><ellipse cx="448" cy="261" rx="4" ry="3" fill="#222"/>
          <path d="m453 229 10 2-1 6-10-2zM436 275l10 4-2 6-9-3z" fill="#0a12e2" stroke="#003" stroke-width=".6"/>
          <path d="m450 220 3 8 6 3h5l6-3q-6-6-20-8zM427 284l9-2 7 3 5 7q-10 3-21-6z" fill="#2e2e2e" stroke="#111"/>
          <!-- red block -->
          <path d="m423 318 37-1 25 2.500-43 1z" fill="#b50606" stroke="#200"/><path d="m423 318 19 2.500v46l-19-4z" fill="#820000" stroke="#200"/><path d="M442 320.500h42.500v46H442z" fill="#fa0303" stroke="#200"/>
        </g>
        <!-- axis triad -->
        <path d="M189.500 446v-14" stroke="#157c22" stroke-width="2"/><path d="m189.500 425-3 8h6z" fill="#157c22"/>
        <path d="M189 446h-13" stroke="#1515d8" stroke-width="2"/><path d="m170 446 7-3v6z" fill="#1515d8"/>
        <path d="m191 443 7 1.500v4l-7 1z" fill="#c41616"/><circle cx="190" cy="446.500" r="1.800" fill="#4b100c"/>
        <text x="187" y="424" class="axis ay">Y</text><text x="165" y="449.500" class="axis az">Z</text><text x="196" y="449.500" class="axis ax">X</text>
      </svg>
      <nav class="taskpane">
        <span class="on"><svg><use href="#home"/></svg></span><span><svg><use href="#books"/></svg></span><span><svg><use href="#folder"/></svg></span><span><svg><use href="#palette"/></svg></span><span><svg><use href="#ball"/></svg></span><span><svg><use href="#list"/></svg></span><span><svg><use href="#forum"/></svg></span>
      </nav>
    </section>
  </div>

  <div class="sheets">
    <div class="nav"><svg viewBox="0 0 11 10"><path d="M3.500 2v6M8 2 5 5l3 3z"/></svg><svg viewBox="0 0 11 10"><path d="M7 2 4 5l3 3z"/></svg><svg viewBox="0 0 11 10"><path d="m4 2 3 3-3 3z"/></svg><svg viewBox="0 0 11 10"><path d="M7.500 2v6M3 2l3 3-3 3z"/></svg></div>
    <span class="on">Model</span><span>3D Views</span><span>Motion Study 1</span>
  </div>
  <footer class="status">
    <span class="product">SOLIDWORKS Premium 2020 SP0.0</span>
    <span class="st-a">Under Defined</span><span class="st-b">Editing Assembly</span><svg class="st-c"><use href="#rebuild"/></svg><span class="st-d">MMGS</span><i class="up"></i><svg class="st-e"><use href="#tag"/></svg>
  </footer>
</main>
<p class="caption">Vue de gauche</p>
</body>
</html>
```
FILE: styles.css
```css
* { box-sizing: border-box; }
body { margin: 0; width: 967px; height: 576px; overflow: hidden; background: #fff; color: #15151f; font: 8.500px/9.200px "Open Sans", "Noto Sans", sans-serif; letter-spacing: -.3px; }
svg { display: block; flex: none; width: 14px; height: 14px; overflow: visible; }
svg.dd { width: 5px; height: 4px; }
.sprite { display: none; }
.window { width: 958px; height: 511px; display: flex; flex-direction: column; }

.titlebar { height: 22px; display: flex; background: #e6e6e6; border-bottom: 1px solid #aaa; position: relative; z-index: 2; width: 957px; }
.logo { margin-left: 6px; width: 102px; height: 25px; padding: 0 0 0 4px; display: flex; align-items: flex-start; background: linear-gradient(90deg, #ddd, #fff 20%, #fff 70%, #ededed); border: 1px solid #aaa; border-top: 0; }
.ds { width: 20px; height: 17px; margin-top: 1px; }
.brand { margin: 9px 0 0 3px; font-size: 11.200px; font-style: italic; color: #d6261f; letter-spacing: .1px; white-space: nowrap; }
.brand b { font-weight: 800; }
.play { width: 15px; height: 21px; border-right: 1px solid #aaa; background: #f3f3f3; display: flex; align-items: center; justify-content: center; }
.play::before { content: ""; border: 4px solid transparent; border-left: 5px solid #222; border-right: 0; }
.quick { margin-left: 20px; width: 251px; height: 22px; display: grid; grid-template-columns: 18px 18px 10px 18px 10px 18px 10px 19px 9px 19px 10px 18px 8px 22px 14px 22px 8px; align-items: center; justify-items: center; color: #333; }
.pressed, .pressed-dd { display: flex; align-items: center; justify-content: center; width: 100%; height: 18px; background: #b9b9b9; border: 1px solid #909090; }
.pressed-dd { background: #e4e4e4; border-left: 0; }
.doc { flex: 1; display: flex; align-items: center; justify-content: center; position: relative; letter-spacing: -.1px; }
.accent { position: absolute; left: 0; top: 0; width: 34px; height: 1px; background: #4a90d9; }
.search { width: 142px; height: 17px; margin-top: 3px; padding: 0 3px 0 4px; display: flex; align-items: center; background: #ececf0; border: 1px solid #555; color: #555; }
.search svg:first-child { width: 11px; height: 11px; margin-right: 3px; }
.search span { flex: 1; white-space: nowrap; letter-spacing: -.5px; }
.search .lens { width: 12px; height: 12px; margin-right: 5px; }
.sys { width: 102px; height: 22px; display: grid; grid-template-columns: 22px 16px 10px 18px 18px 18px; align-items: center; justify-items: center; color: #333; }
.sys svg:not(.dd) { width: 12px; height: 12px; }
.sys b { font-size: 13px; }

.ribbon { height: 61px; width: 957px; padding-top: 4px; display: grid; grid-template-columns: 52px 50px 30px 44px 80px 37px 53px 55px 42px 43px 35px 43px 43px 43px 46px 43px 38px; background: #f8f8f8; border-bottom: 1px solid #999; border-right: 1px solid #888; letter-spacing: -.43px; }
.cmd { display: flex; flex-direction: column; align-items: center; height: 55px; padding-top: 8px; text-align: center; white-space: nowrap; position: relative; }
.cmd svg { margin-bottom: 1px; }
.menu { padding-top: 3px; }
.menu::after { content: ""; margin-top: auto; margin-bottom: 6px; border: 2px solid transparent; border-top: 3px solid #444; border-bottom: 0; }
.end { border-right: 1px solid #d5d5d5; }
.off { color: #b3b3b3; }
.active { background: #b1b1b1; border: 1px solid #888; padding-top: 7px; }

.tabrow { height: 15px; width: 957px; display: flex; align-items: flex-start; position: relative; z-index: 1; border-right: 1px solid #888; }
.tabs { width: 433px; height: 16px; display: flex; }
.tabs span { height: 15px; line-height: 15px; text-align: center; background: #d2d2d2; border: 1px solid #a2a2a2; border-top: 0; border-left: 0; white-space: nowrap; color: #333; letter-spacing: -.2px; }
.tabs span:nth-child(1) { width: 47px; background: #f8f8f8; border-bottom-color: #f8f8f8; font-weight: 600; letter-spacing: -.3px; }
.tabs span:nth-child(2), .tabs span:nth-child(3) { width: 39px; }
.tabs span:nth-child(4) { width: 40px; }
.tabs span:nth-child(5) { width: 43px; }
.tabs span:nth-child(6) { width: 93px; }
.tabs span:nth-child(7) { width: 39px; }
.hud { height: 20px; color: #777; display: grid; grid-template-columns: 18px 19px 18px 18px 17px 20px 8px 20px 9px 20px 8px 18px 18px 10px 20px 7px; align-items: center; justify-items: center; }
.docsys { margin-left: auto; margin-right: 3px; height: 20px; display: grid; grid-template-columns: 18px 19px 18px 18px 18px; align-items: center; justify-items: center; color: #888; }
.docsys svg { width: 11px; height: 11px; }

.work { height: 388px; display: flex; }
.panel { width: 161px; display: flex; flex-direction: column; background: #f8f8f8; border-right: 1px solid #999; border-top: 1px solid #8798a3; position: relative; }
.grip { height: 16px; display: flex; align-items: center; justify-content: center; border-top: 1px solid #ddd; }
.grip i, .handle i { width: 4px; height: 4px; border: 1px solid #999; border-radius: 50%; }
.grip i { margin-right: 4px; }
.ptabs { height: 18px; display: flex; align-items: center; }
.ptabs span { width: 28px; height: 18px; display: flex; align-items: center; justify-content: center; background: #cfcfcf; border: 1px solid #999; border-left: 0; }
.ptabs .on { background: #f8f8f8; border-color: transparent #999 transparent transparent; }
.ptabs .more { width: 9px; height: 9px; margin-left: 7px; }
.filter { margin: 1px 4px 0 2px; height: 18px; border: 1px solid #ccc; display: flex; align-items: center; padding-left: 1px; color: #333; }
.filter .dd { margin: 4px 0 0; }
.treebox { height: 320px; display: flex; }
.tree { list-style: none; margin: 0; padding: 0; width: 148px; overflow: hidden; letter-spacing: -.2px; }
.tree li { height: 15.440px; display: flex; align-items: center; white-space: nowrap; padding-left: 6px; }
.tree li svg { width: 13px; height: 13px; margin: 0 3px 0 8px; }
.tree li::before { content: ""; box-sizing: content-box; width: 0; flex: none; border: 2.500px solid transparent; border-left: 4px solid #555; border-right: 0; }
.tree .opened { padding-left: 5px; }
.tree .opened::before { border: 2.500px solid transparent; border-top: 3px solid #555; border-bottom: 0; }
.tree .sub { padding-left: 22px; }
.tree .leaf::before { border-color: transparent; }
.vscroll { width: 10px; display: flex; flex-direction: column; align-items: center; background: #f1f1f1; }
.vscroll svg { width: 9px; height: 9px; margin-top: 2px; }
.vscroll i { width: 10px; height: 28px; margin: 112px 0 auto; background: #c9c9c9; }
.hscroll { height: 12px; margin-right: 3px; display: flex; align-items: center; background: #f1f1f1; padding: 0 10px 0 1px; }
.hscroll svg { width: 9px; height: 9px; }
.hscroll i { width: 46px; height: 10px; margin: 0 auto 0 2px; background: #cdcdcd; }
.handle { position: absolute; left: 160px; top: 172px; width: 6px; height: 27px; background: #fff; border: 1px solid #999; border-left: 0; display: flex; align-items: center; justify-content: center; z-index: 1; }
.view { width: 797px; height: 388px; position: relative; border-right: 1px solid #888; }
.scene { width: 796px; height: 388px; }
.axis { font: 8px "Liberation Sans", sans-serif; }
.ay { fill: #157c22; }
.az { fill: #1515d8; }
.ax { fill: #f22; }
.taskpane { position: absolute; right: -1px; top: 20px; width: 18px; border: 1px solid #999; border-bottom: 0; }
.taskpane span { height: 17px; display: flex; align-items: center; justify-content: center; background: #cdcdcd; border-bottom: 1px solid #999; }
.taskpane .on { background: #f8f8f8; }

.sheets { height: 12px; width: 958px; display: flex; background: #f7f7f7; border: 1px solid #999; border-left: 0; }
.sheets span { height: 11px; line-height: 10px; text-align: center; background: #d2d2d2; border-right: 1px solid #999; white-space: nowrap; letter-spacing: -.2px; }
.sheets .on { width: 41px; background: #fff; font-weight: 700; }
.sheets span:nth-of-type(2) { width: 47px; }
.sheets span:nth-of-type(3) { width: 76px; text-align: left; padding-left: 6px; }
.nav { width: 45px; display: flex; background: #a5a5a5; }
.nav svg { width: 11.250px; height: 10px; border-right: 1px solid #888; fill: #858585; stroke: #858585; stroke-width: 1; }
.status { height: 13px; width: 957px; display: flex; align-items: center; background: #e6e6e6; white-space: nowrap; letter-spacing: -.32px; }
.product { width: 671px; }
.st-a { width: 66px; }
.st-b { width: 84px; }
.status .st-c { width: 11px; height: 11px; margin-right: 52px; }
.st-d { width: 37px; }
.up { border: 2px solid transparent; border-bottom: 3px solid #444; border-top: 0; }
.status .st-e { width: 12px; height: 12px; margin-left: auto; margin-right: 1px; }
.caption { margin: 27px 0 0 443px; font: bold 20px/24px "Liberation Sans", Arial, sans-serif; color: #000; white-space: nowrap; letter-spacing: .15px; }
```
